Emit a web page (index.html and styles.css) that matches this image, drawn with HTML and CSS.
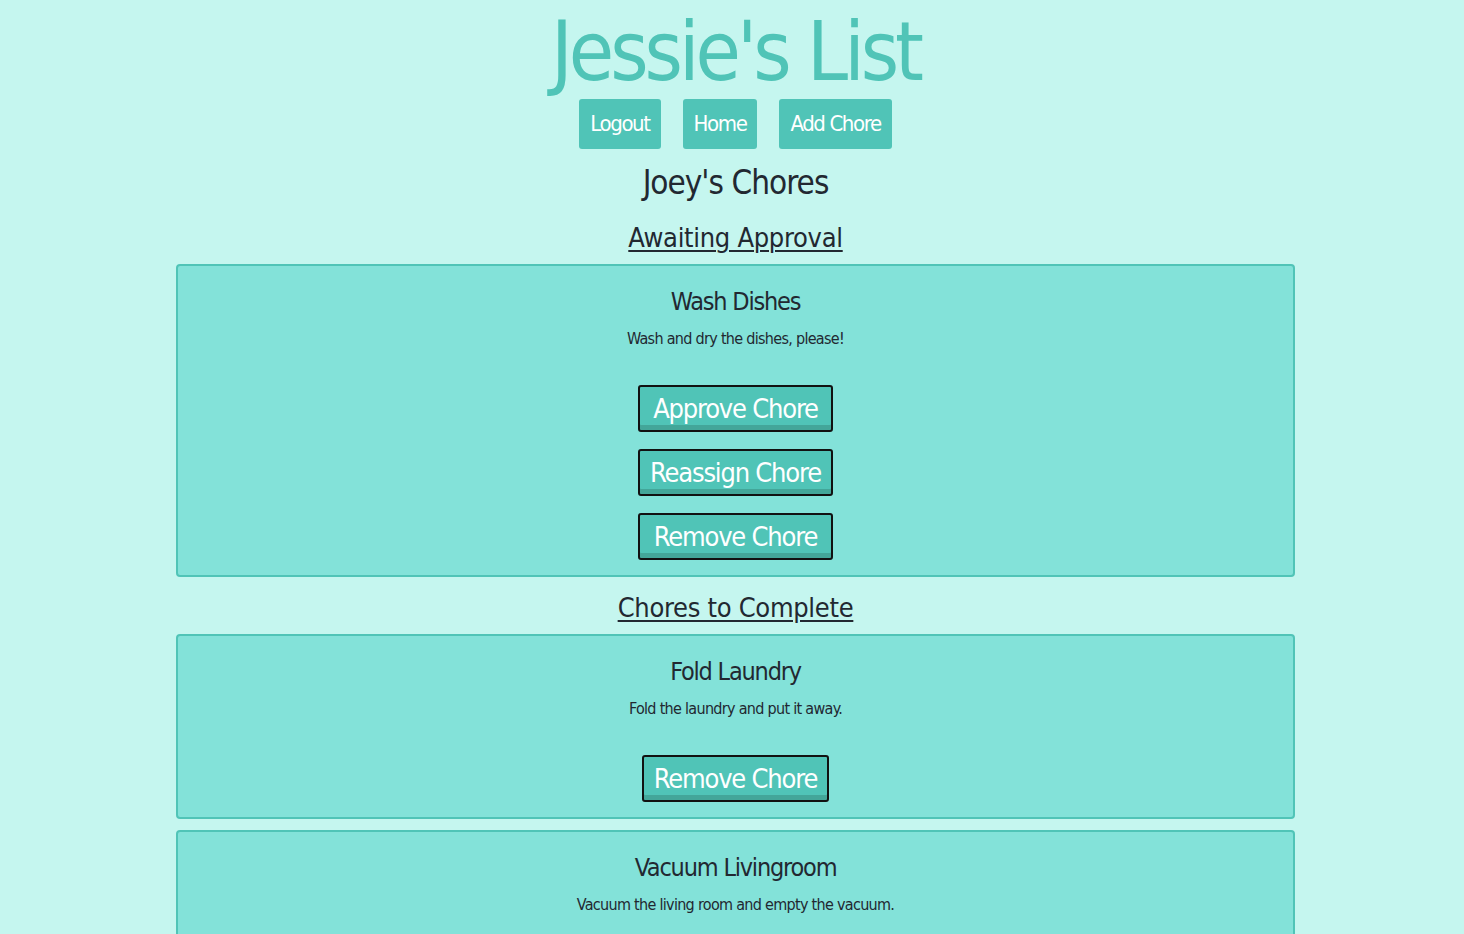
FILE: index.html
```html
<!DOCTYPE html>
<html>
<head>
<meta charset="utf-8">
<title>Jessie's List</title>
<link rel="stylesheet" href="styles.css">
</head>
<body>
<header class="header">
  <h1 class="title">Jessie's List</h1>
  <nav class="nav">
    <a class="nav-btn" href="#">Logout</a>
    <a class="nav-btn" href="#">Home</a>
    <a class="nav-btn" href="#">Add Chore</a>
  </nav>
</header>
<main class="main">
  <h2 class="kid">Joey's Chores</h2>
  <h3 class="section">Awaiting Approval</h3>
  <div class="card card-first">
    <h4 class="chore">Wash Dishes</h4>
    <p class="desc">Wash and dry the dishes, please!</p>
    <div class="actions">
      <button class="btn">Approve Chore</button>
      <button class="btn">Reassign Chore</button>
      <button class="btn">Remove Chore</button>
    </div>
  </div>
  <h3 class="section">Chores to Complete</h3>
  <div class="card">
    <h4 class="chore">Fold Laundry</h4>
    <p class="desc">Fold the laundry and put it away.</p>
    <div class="actions">
      <button class="btn">Remove Chore</button>
    </div>
  </div>
  <div class="card">
    <h4 class="chore">Vacuum Livingroom</h4>
    <p class="desc">Vacuum the living room and empty the vacuum.</p>
    <div class="actions">
      <button class="btn">Remove Chore</button>
    </div>
  </div>
</main>
</body>
</html>
```

FILE: styles.css
```css
html, body {
  margin: 0;
  background: #c5f6ef;
}
body {
  padding: 0 0 0 7px;
  font-family: "DejaVu Sans Condensed", "DejaVu Sans", sans-serif;
  color: #222831;
  text-align: center;
}
.header {
  display: flex;
  flex-direction: column;
  align-items: center;
}
.title {
  margin: 6px 0 0;
  font-size: 82px;
  line-height: 92px;
  letter-spacing: -4px;
  font-weight: normal;
  color: #50c4b7;
}
.nav {
  display: flex;
  gap: 22px;
  margin-top: 1px;
}
.nav-btn {
  display: block;
  background: #50c4b7;
  color: #fff;
  text-decoration: none;
  font-size: 22px;
  letter-spacing: -1.4px;
  line-height: 50px;
  height: 50px;
  padding: 0 11px;
  border-radius: 3px;
}
.main {
  width: 1119px;
  margin: 0 auto;
}
.kid {
  margin: 14px 0 15px;
  font-size: 33px;
  letter-spacing: -1px;
  line-height: 40px;
  font-weight: normal;
}
.section {
  margin: 2px 0 6px;
  font-size: 27px;
  letter-spacing: -0.3px;
  line-height: 40px;
  font-weight: normal;
  text-decoration: underline;
  text-decoration-thickness: 2px;
  text-underline-offset: 3px;
}
.card {
  box-sizing: border-box;
  background: #83e2d9;
  border: 2px solid #50c4b7;
  border-radius: 4px;
  padding: 20px 0 15px;
  margin-bottom: 11px;
}
.chore {
  margin: 0;
  font-size: 25px;
  letter-spacing: -1.2px;
  line-height: 32px;
  font-weight: normal;
}
.desc {
  margin: 10px 0 0;
  font-size: 16px;
  letter-spacing: -0.7px;
  line-height: 22px;
}
.actions {
  display: inline-flex;
  flex-direction: column;
  gap: 17px;
  margin-top: 35px;
}
.btn {
  font-family: inherit;
  font-size: 27px;
  letter-spacing: -1.2px;
  line-height: 39px;
  height: 47px;
  padding: 0 10px;
  color: #fff;
  background: #50c4b7;
  border: 2px solid #111;
  border-radius: 3px;
  box-shadow: inset 0 -5px 0 #43a699;
  cursor: pointer;
}
```
